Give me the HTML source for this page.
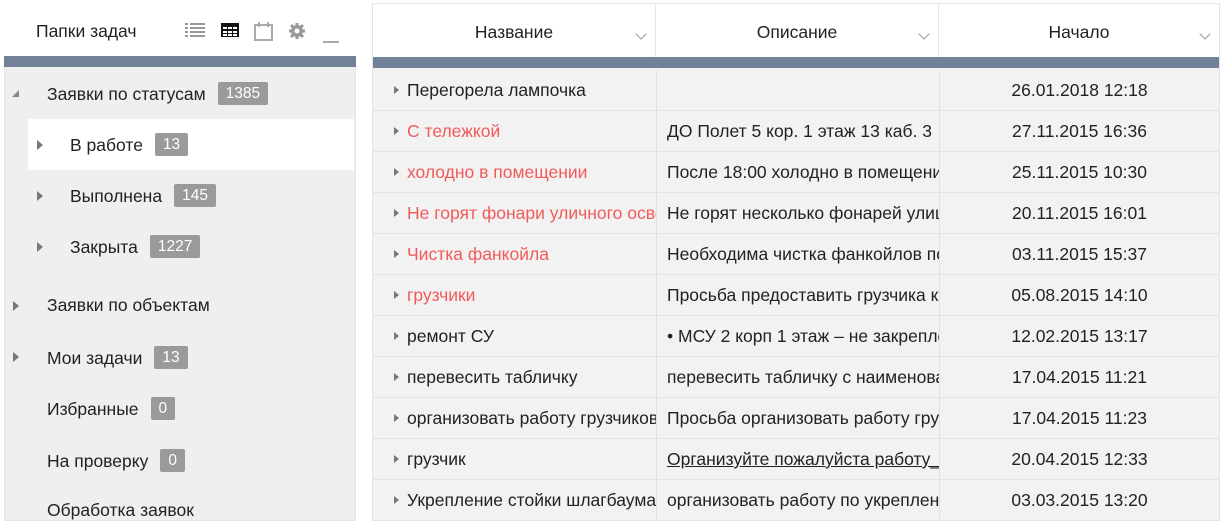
<!DOCTYPE html>
<html><head><meta charset="utf-8"><style>
*{margin:0;padding:0;box-sizing:border-box}
body{width:1222px;height:528px;background:#fff;font-family:"Liberation Sans","Noto Sans CJK SC",sans-serif;position:relative;overflow:hidden;color:#222}
.abs{position:absolute}
#left{left:4px;top:3px;width:352px;height:518px;background:#efefef;border:1px solid #e4e4e4}
#lh{left:4px;top:3px;width:352px;height:53px;background:#fff}
.bar{background:#718198;height:11px}
.it{position:absolute;font-size:17.5px;line-height:20px;white-space:nowrap}
.badge{display:inline-block;background:#9a9a9a;color:#fff;font-size:15.5px;line-height:23px;padding:0 8px;border-radius:2px;margin-left:12px;vertical-align:2px}
.tri{position:absolute;width:0;height:0;border-top:5px solid transparent;border-bottom:5px solid transparent;border-left:6px solid #777}
#right{left:372px;top:3px;width:848px;height:518px;background:#f2f2f2;border:1px solid #e4e4e4}
.hc{position:absolute;top:0;height:53px;background:#fff;font-size:17.5px;line-height:57px;text-align:center;border-right:1px solid #e6e6e6}
.chev{position:absolute;right:10px;top:26px;width:8px;height:8px;border-right:1px solid #999;border-bottom:1px solid #999;transform:rotate(45deg)}
.row{position:absolute;left:0;width:846px;height:41px;border-bottom:1px solid #e2e2e2;font-size:17.5px;line-height:40px}
.c{position:absolute;top:0;height:40px;overflow:hidden;white-space:nowrap}
.c1{left:0;width:283px;padding-left:34px}
.c2{left:283px;width:283px;padding-left:10px;border-left:1px solid #e2e2e2}
.c3{left:566px;width:280px;text-align:center;border-left:1px solid #e2e2e2}
.rt{position:absolute;left:21px;top:16px;width:0;height:0;border-top:4px solid transparent;border-bottom:4px solid transparent;border-left:5px solid #777}
.red{color:#f25a5a}
</style></head><body>
<div id="left" class="abs"></div>
<div id="lh" class="abs"></div>
<div class="abs bar" style="left:4px;top:56px;width:352px"></div>
<div class="it" style="left:36px;top:21px">Папки задач</div>
<svg class="abs" style="left:185px;top:21px" width="160" height="26">
<g fill="#999"><rect x="0" y="2" width="3" height="2"/><rect x="5" y="2" width="15" height="2"/><rect x="0" y="6" width="3" height="2"/><rect x="5" y="6" width="15" height="2"/><rect x="0" y="10" width="3" height="2"/><rect x="5" y="10" width="15" height="2"/><rect x="0" y="14" width="3" height="2"/><rect x="5" y="14" width="15" height="2"/></g>
<g><rect x="36" y="2" width="18" height="14" fill="#111"/><g fill="#fff"><rect x="38" y="6" width="4" height="2"/><rect x="43" y="6" width="4" height="2"/><rect x="48" y="6" width="4" height="2"/><rect x="38" y="10" width="4" height="2"/><rect x="43" y="10" width="4" height="2"/><rect x="48" y="10" width="4" height="2"/><rect x="38" y="13" width="4" height="2"/><rect x="43" y="13" width="4" height="2"/><rect x="48" y="13" width="4" height="2"/></g></g>
<g fill="none" stroke="#aaa" stroke-width="2"><rect x="70" y="4" width="17" height="15"/><line x1="74" y1="1" x2="74" y2="6"/><line x1="83" y1="1" x2="83" y2="6"/></g>
<g fill="#999"><circle cx="112" cy="10" r="6"/><g stroke="#999" stroke-width="3"><line x1="112" y1="2" x2="112" y2="18"/><line x1="104" y1="10" x2="120" y2="10"/><line x1="106" y1="4" x2="118" y2="16"/><line x1="118" y1="4" x2="106" y2="16"/></g><circle cx="112" cy="10" r="2.5" fill="#fff"/></g>
<rect x="138" y="20" width="16" height="2" fill="#aaa"/>
</svg>
<div class="abs" style="left:28px;top:119px;width:326px;height:51px;background:#fff"></div>
<div class="abs" style="left:12px;top:90px;width:0;height:0;border-left:7px solid transparent;border-bottom:7px solid #888"></div>
<div class="it" style="left:47px;top:82px">Заявки по статусам<span class="badge">1385</span></div>
<div class="tri" style="left:37px;top:140px"></div>
<div class="it" style="left:70px;top:133px">В работе<span class="badge">13</span></div>
<div class="tri" style="left:37px;top:191px"></div>
<div class="it" style="left:70px;top:184px">Выполнена<span class="badge">145</span></div>
<div class="tri" style="left:37px;top:242px"></div>
<div class="it" style="left:70px;top:235px">Закрыта<span class="badge">1227</span></div>
<div class="tri" style="left:13px;top:301px"></div>
<div class="it" style="left:47px;top:295px">Заявки по объектам</div>
<div class="tri" style="left:13px;top:352px"></div>
<div class="it" style="left:47px;top:346px">Мои задачи<span class="badge">13</span></div>
<div class="it" style="left:47px;top:397px">Избранные<span class="badge">0</span></div>
<div class="it" style="left:47px;top:449px">На проверку<span class="badge">0</span></div>
<div class="it" style="left:47px;top:500px">Обработка заявок</div>

<div id="right" class="abs">
<div class="hc" style="left:0;width:283px">Название<div class="chev"></div></div>
<div class="hc" style="left:283px;width:283px">Описание<div class="chev"></div></div>
<div class="hc" style="left:566px;width:280px;border-right:none">Начало<div class="chev"></div></div>
<div class="abs bar" style="left:0;top:53px;width:846px"></div>
<div class="row" style="top:66px"><div class="rt"></div><div class="c c1">Перегорела лампочка</div><div class="c c2"></div><div class="c c3">26.01.2018 12:18</div></div>
<div class="row" style="top:107px"><div class="rt"></div><div class="c c1 red">С тележкой</div><div class="c c2">ДО Полет 5 кор. 1 этаж 13 каб. 3</div><div class="c c3">27.11.2015 16:36</div></div>
<div class="row" style="top:148px"><div class="rt"></div><div class="c c1 red">холодно в помещении</div><div class="c c2">После 18:00 холодно в помещении</div><div class="c c3">25.11.2015 10:30</div></div>
<div class="row" style="top:189px"><div class="rt"></div><div class="c c1 red">Не горят фонари уличного освещения</div><div class="c c2">Не горят несколько фонарей улицы</div><div class="c c3">20.11.2015 16:01</div></div>
<div class="row" style="top:230px"><div class="rt"></div><div class="c c1 red">Чистка фанкойла</div><div class="c c2">Необходима чистка фанкойлов по</div><div class="c c3">03.11.2015 15:37</div></div>
<div class="row" style="top:271px"><div class="rt"></div><div class="c c1 red">грузчики</div><div class="c c2">Просьба предоставить грузчика к</div><div class="c c3">05.08.2015 14:10</div></div>
<div class="row" style="top:312px"><div class="rt"></div><div class="c c1">ремонт СУ</div><div class="c c2">• МСУ 2 корп 1 этаж – не закрепле</div><div class="c c3">12.02.2015 13:17</div></div>
<div class="row" style="top:353px"><div class="rt"></div><div class="c c1">перевесить табличку</div><div class="c c2">перевесить табличку с наименова</div><div class="c c3">17.04.2015 11:21</div></div>
<div class="row" style="top:394px"><div class="rt"></div><div class="c c1">организовать работу грузчиков</div><div class="c c2">Просьба организовать работу груз</div><div class="c c3">17.04.2015 11:23</div></div>
<div class="row" style="top:435px"><div class="rt"></div><div class="c c1">грузчик</div><div class="c c2" style="text-decoration:underline">Организуйте пожалуйста работу_</div><div class="c c3">20.04.2015 12:33</div></div>
<div class="row" style="top:476px"><div class="rt"></div><div class="c c1">Укрепление стойки шлагбаума</div><div class="c c2">организовать работу по укреплен</div><div class="c c3">03.03.2015 13:20</div></div>
</div>
</body></html>
